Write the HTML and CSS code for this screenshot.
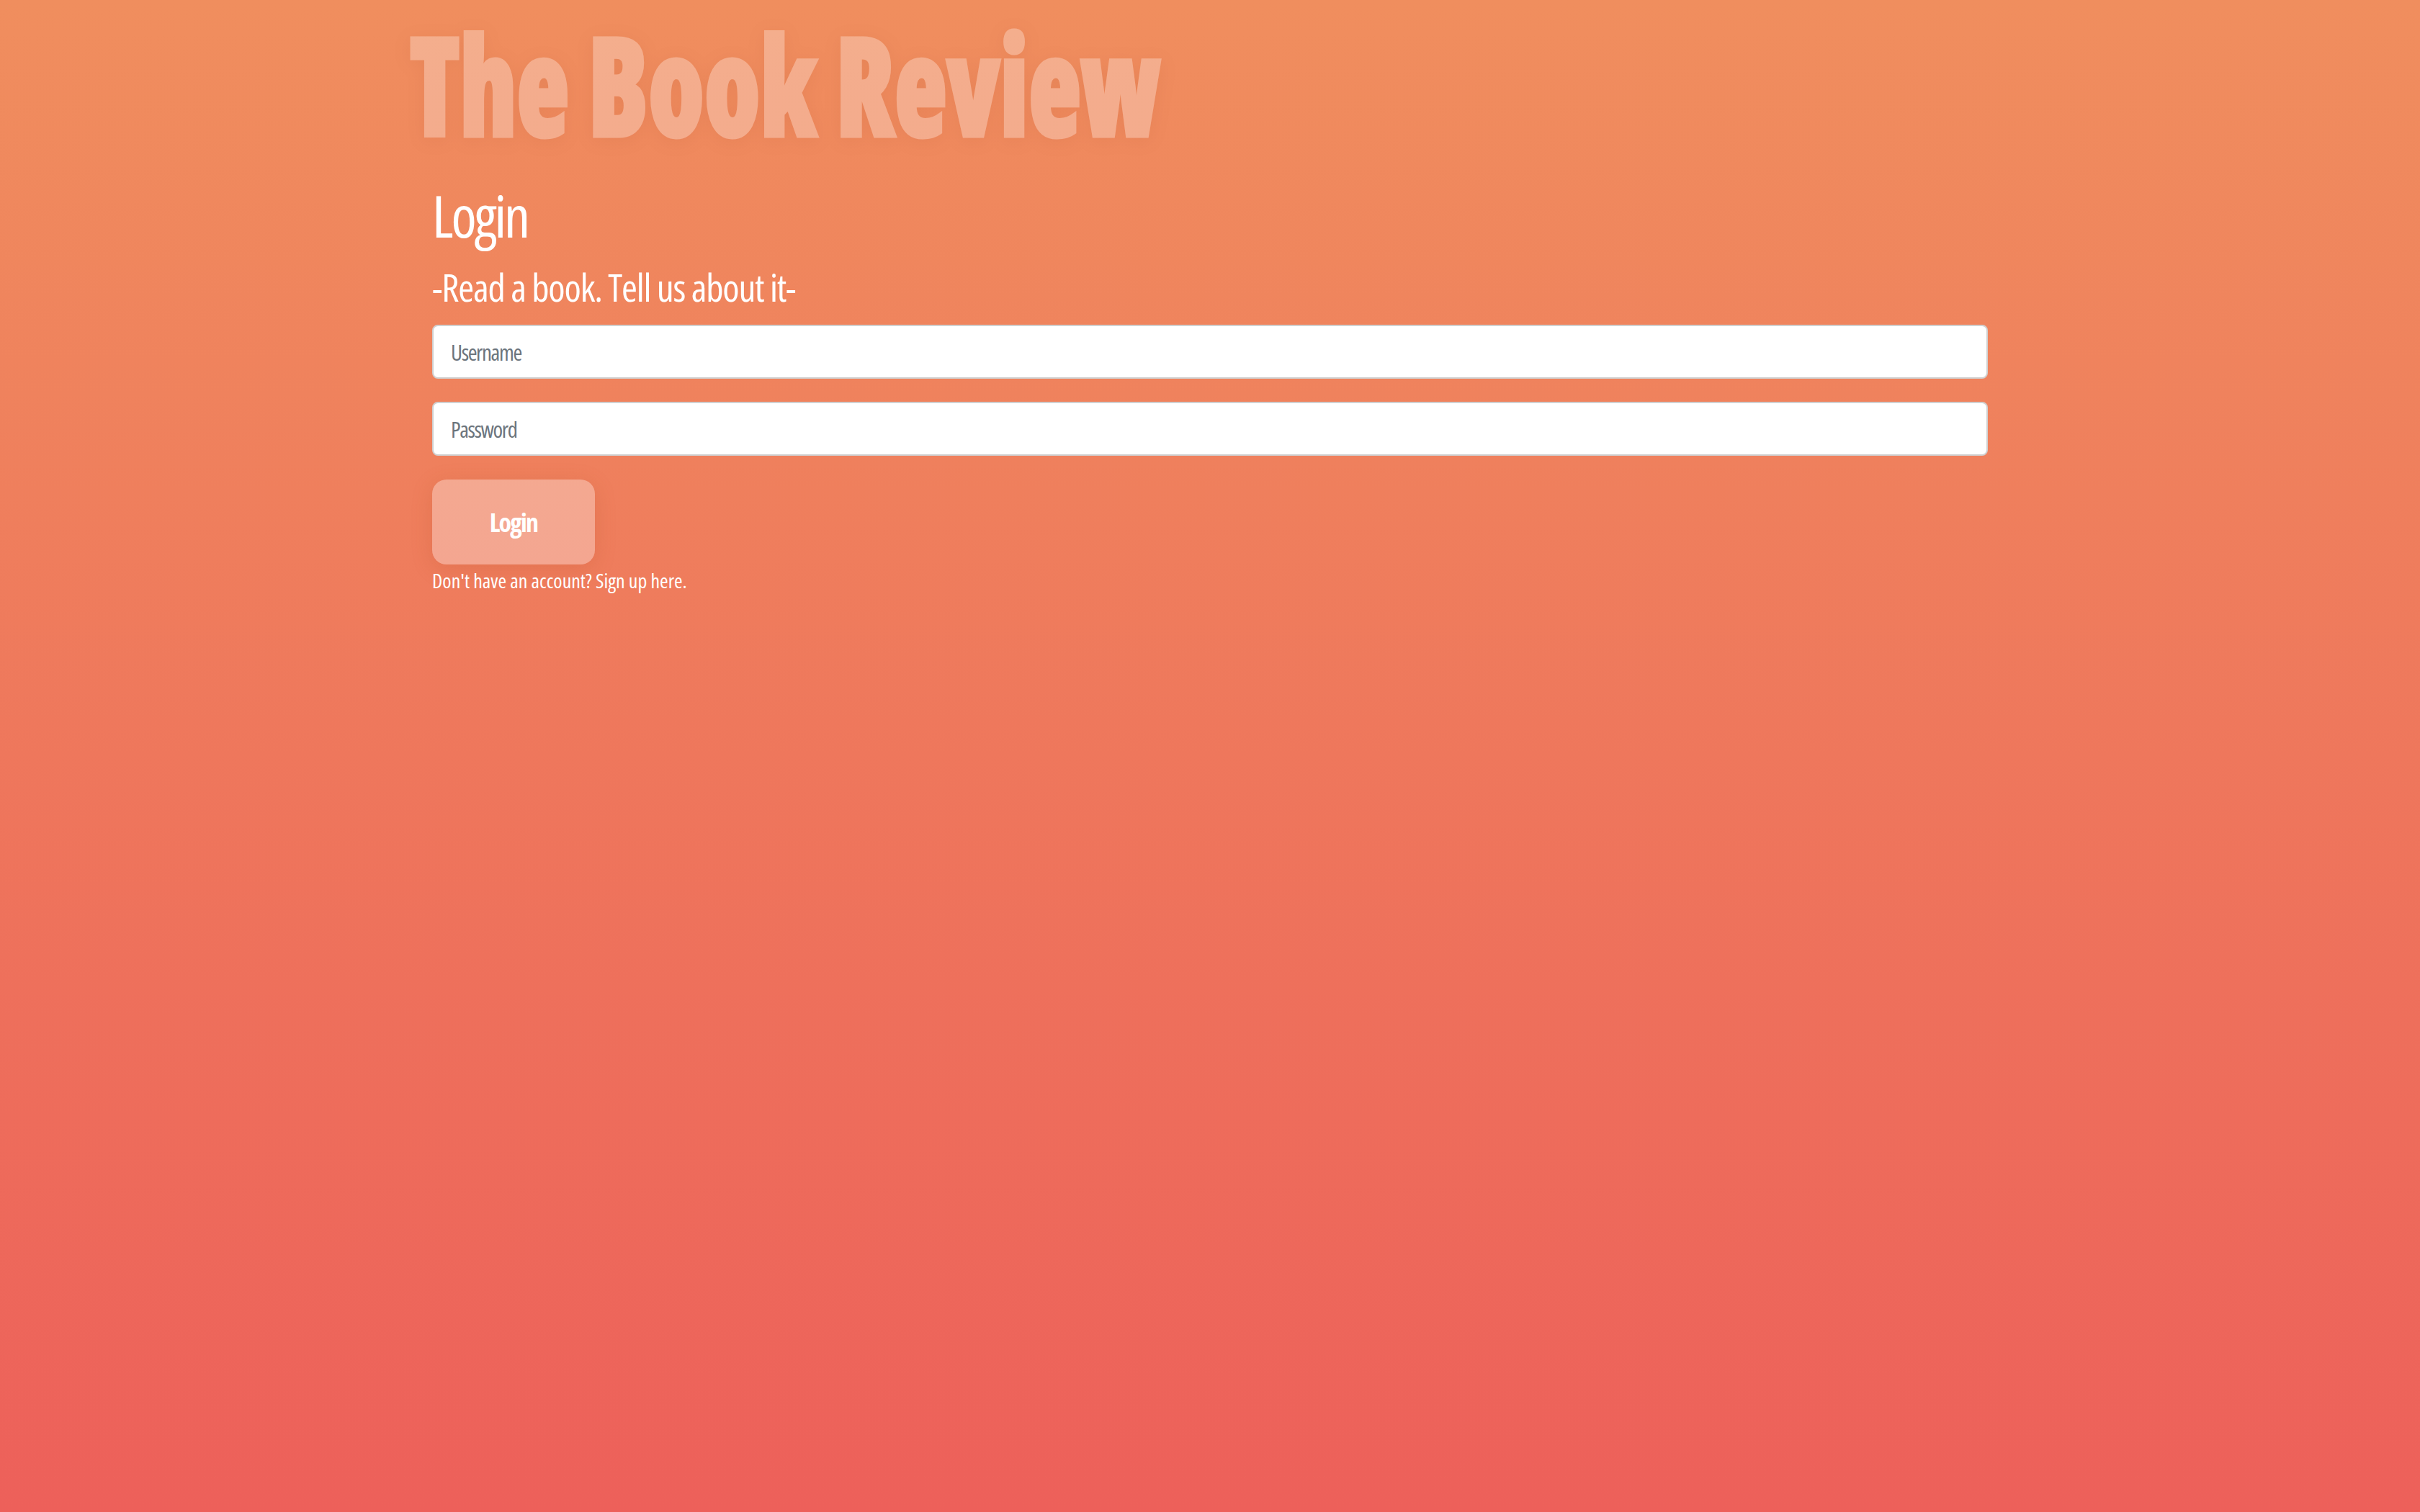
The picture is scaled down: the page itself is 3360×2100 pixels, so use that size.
FILE: index.html
```html
<!DOCTYPE html>
<html lang="en">
<head>
<meta charset="utf-8">
<title>The Book Review - Login</title>
<link rel="stylesheet" href="styles.css">
</head>
<body>
<main class="page">
  <h1 class="brand">The Book Review</h1>
  <h2 class="heading">Login</h2>
  <h3 class="tagline">-Read a book. Tell us about it-</h3>
  <form class="login-form">
    <input class="field" type="text" placeholder="Username">
    <input class="field" type="password" placeholder="Password">
    <button class="btn" type="button">Login</button>
  </form>
  <p class="signup"><a href="#">Don't have an account? Sign up here.</a></p>
</main>
</body>
</html>
```

FILE: styles.css
```css
html, body {
  margin: 0;
  padding: 0;
}
body {
  min-height: 100vh;
  background: linear-gradient(to bottom, #f08e5e 0%, #ed605a 100%);
  font-family: "Open Sans", "Roboto Condensed", sans-serif;
  font-stretch: 75%;
  color: #fff;
}
.page {
  width: 2160px;
  margin: 0 auto;
  display: flex;
  flex-direction: column;
  align-items: flex-start;
}
.brand {
  margin: 16px 0 0 -31px;
  font-size: 190px;
  line-height: 200px;
  font-weight: 800;
  color: #fff;
  -webkit-text-stroke: 5px #fff;
  opacity: 0.29;
  text-shadow: 0 4px 26px rgba(110, 30, 0, 0.24);
  transform: scaleX(0.791);
  transform-origin: left center;
}
.heading {
  margin: 35px 0 0;
  font-size: 80px;
  line-height: 96px;
  font-weight: 400;
  letter-spacing: -3px;
}
.tagline {
  margin: 20px 0 0;
  font-size: 53px;
  line-height: 64px;
  font-weight: 400;
  letter-spacing: -1.2px;
}
.login-form {
  margin-top: 20px;
  width: 100%;
  display: flex;
  flex-direction: column;
  align-items: flex-start;
  gap: 32px;
}
.field {
  box-sizing: border-box;
  width: 100%;
  height: 75px;
  padding: 0 24px;
  border: 2px solid #d0d0d0;
  border-radius: 8px;
  background: #fff;
  font-family: inherit;
  font-stretch: 75%;
  font-size: 31px;
  letter-spacing: -1.4px;
  color: #212529;
}
.field::placeholder {
  color: #6c757d;
}
.btn {
  margin-top: 1px;
  width: 226px;
  height: 118px;
  border: 0;
  border-radius: 20px;
  background: rgba(255, 255, 255, 0.32);
  box-shadow: 0 6px 30px rgba(170, 70, 30, 0.18);
  color: #fff;
  font-family: inherit;
  font-stretch: 75%;
  font-size: 36px;
  font-weight: 700;
  letter-spacing: -1.8px;
}
.signup {
  margin: 4px 0 0;
  font-size: 28px;
  line-height: 36px;
}
.signup a {
  color: #fff;
  text-decoration: none;
}
```
